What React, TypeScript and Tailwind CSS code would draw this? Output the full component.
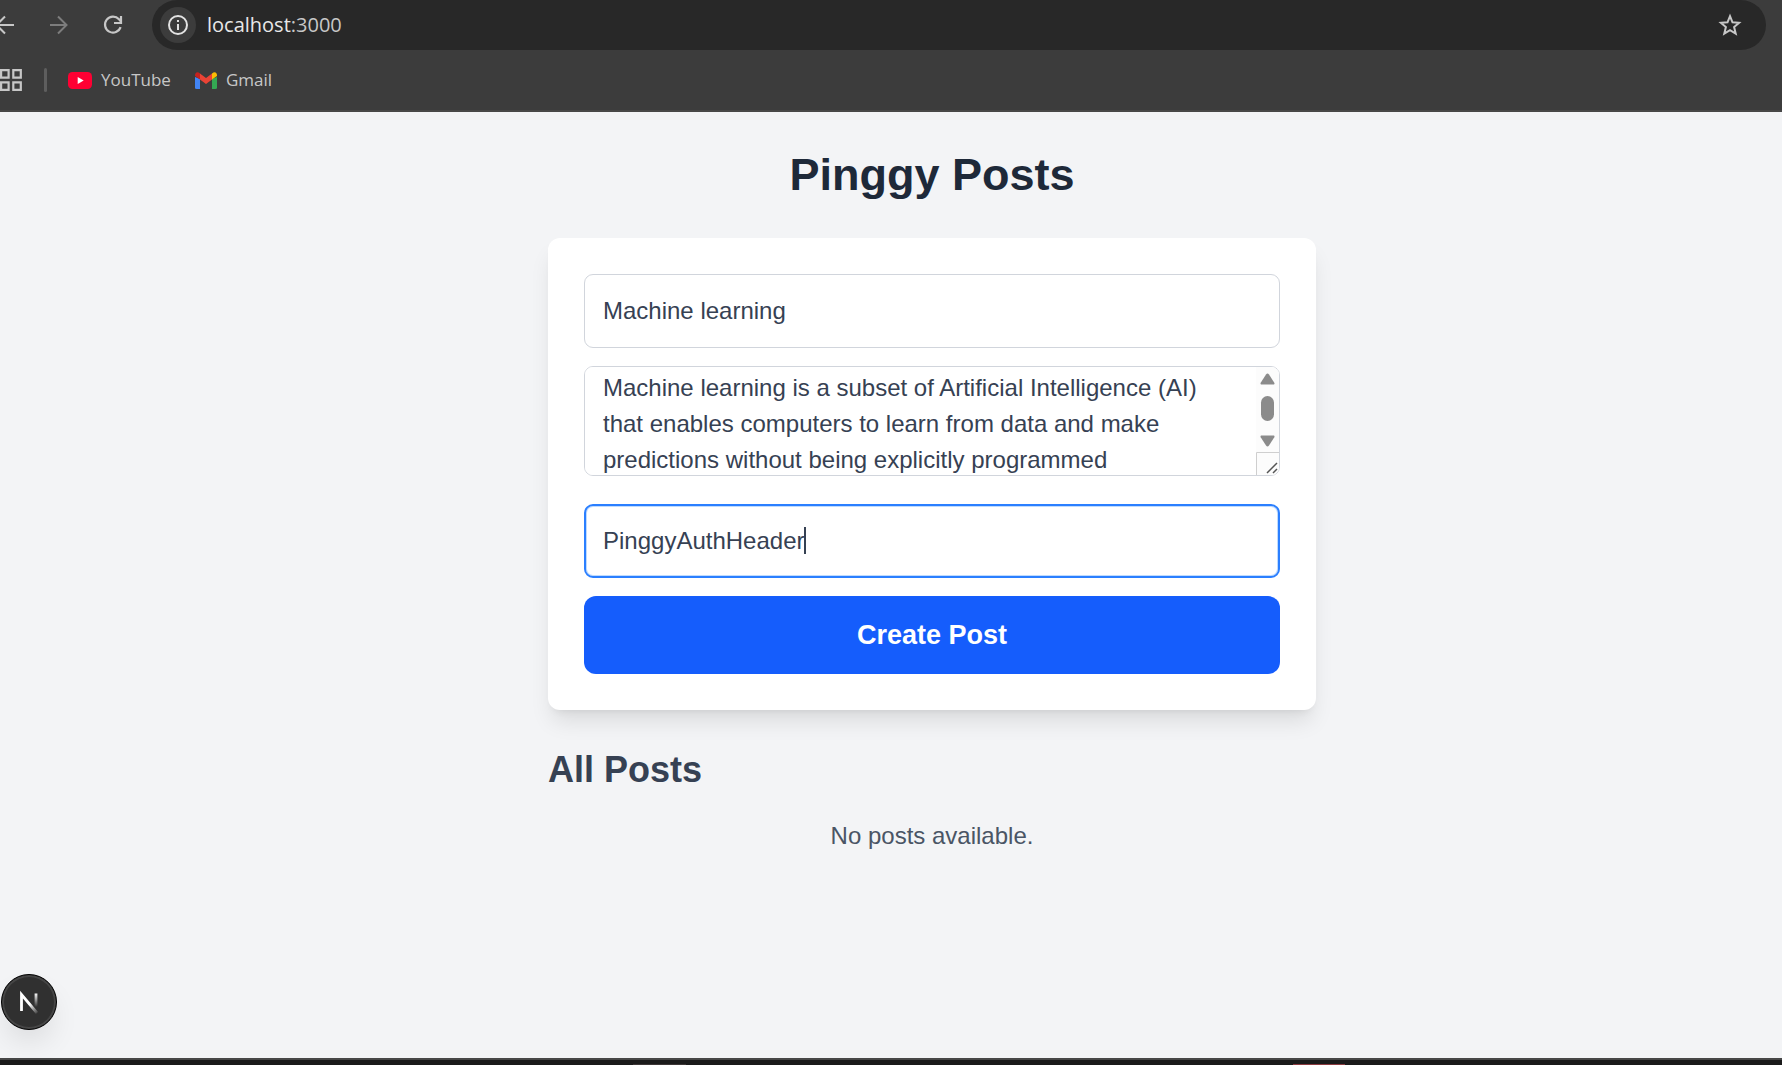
import { useLayoutEffect, useRef } from "react";

const fieldClass =
  "block w-full rounded-[9px] border border-gray-300 bg-white px-[18px] py-[18px] text-2xl leading-9 text-gray-700 outline-none";

function BackIcon() {
  return (
    <svg width="20" height="20" viewBox="0 0 20 20" fill="none" stroke="#c7c7c7" strokeWidth="2">
      <path d="M20 10H3M11 1.5L2.5 10l8.500 8.500" />
    </svg>
  );
}

function ForwardIcon() {
  return (
    <svg width="20" height="20" viewBox="0 0 20 20" fill="none" stroke="#7d7d7d" strokeWidth="2">
      <path d="M1 10h16M9 1.500L17.500 10L9 18.500" />
    </svg>
  );
}

function ReloadIcon() {
  return (
    <svg width="20" height="20" viewBox="0 0 20 20" fill="none" stroke="#c7c7c7" strokeWidth="2.200">
      <path d="M17.600 12.200A8 8 0 1 1 16 4.300L18 6.500" />
      <path d="M18 1v7h-7" />
    </svg>
  );
}

function InfoIcon() {
  return (
    <svg width="20" height="20" viewBox="0 0 20 20" fill="none" stroke="#e3e3e3" strokeWidth="2">
      <circle cx="10" cy="10" r="9" />
      <path d="M10 9v6M10 5v2" />
    </svg>
  );
}

function StarIcon() {
  return (
    <svg width="24" height="24" viewBox="0 0 24 24" fill="none" stroke="#c7c7c7" strokeWidth="2">
      <path d="M12 3.200l2.500 6.100 6.600.5-5 4.300 1.600 6.500L12 17.100l-5.700 3.500 1.600-6.500-5-4.300 6.600-.5z" />
    </svg>
  );
}

function AppsIcon() {
  return (
    <svg width="22" height="22" viewBox="0 0 22 22" fill="none" stroke="#c7c7c7" strokeWidth="2.200">
      <path d="M1.100 1.100h7.500v7.500H1.100zM13.300 1.100h7.500v7.500h-7.500zM1.100 13.300h7.500v7.500H1.100zM13.300 13.300h7.500v7.500h-7.500z" />
    </svg>
  );
}

function YouTubeIcon() {
  return (
    <svg width="24" height="17" viewBox="0 0 24 17">
      <rect width="24" height="17" rx="4.500" fill="#ff0033" />
      <path d="M9.700 5v7l6-3.500z" fill="#fff" />
    </svg>
  );
}

function GmailIcon() {
  return (
    <svg width="22" height="17" viewBox="0 0 22 17">
      <path d="M0 5v10.500Q0 17 1.500 17H5V7z" fill="#4285f4" />
      <path d="M22 5v10.500q0 1.500-1.500 1.500H17V7z" fill="#34a853" />
      <path d="M5 7.500v-6l6 4.500 6-4.500v6L11 12z" fill="#ea4335" />
      <path d="M0 3.500Q0 .5 2.500.3 3.500.3 5 1.500v6L0 4z" fill="#c5221f" />
      <path d="M22 3.500Q22 .5 19.500.3 18.500.3 17 1.500v6L22 4z" fill="#fbbc04" />
    </svg>
  );
}

function BrowserBar() {
  return (
    <header className="h-28 overflow-hidden border-b-2 border-[#474747] bg-[#3c3c3c] font-['Open_Sans','Noto_Sans',sans-serif]">
      <div className="flex h-[50px] items-center pr-4">
        <button aria-label="Back" className="-ml-1.5 mr-[35px]">
          <BackIcon />
        </button>
        <button aria-label="Forward" className="mr-[34px]">
          <ForwardIcon />
        </button>
        <button aria-label="Reload" className="mr-[29px]">
          <ReloadIcon />
        </button>
        <div className="flex h-full min-w-0 flex-1 items-center rounded-full bg-[#282828] pl-2 pr-6">
          <button
            aria-label="View site information"
            className="flex size-9 shrink-0 items-center justify-center rounded-full bg-[#3c3c3c]"
          >
            <InfoIcon />
          </button>
          <div className="flex-1 pl-[11px] text-xl leading-7 text-[#c7c7c7]">
            <span className="text-[#e8e8e8]">localhost</span>:3000
          </div>
          <button aria-label="Bookmark this page">
            <StarIcon />
          </button>
        </div>
      </div>
      <nav aria-label="Bookmarks" className="flex h-[60px] items-center text-[17px] leading-6 text-[#c7c7c7]">
        <button aria-label="Apps">
          <AppsIcon />
        </button>
        <span className="ml-[22px] h-6 w-[3px] rounded-full bg-[#5e5e5e]" />
        <a href="#youtube" className="ml-[21px] flex items-center gap-[9px]">
          <YouTubeIcon />
          YouTube
        </a>
        <a href="#gmail" className="ml-6 flex items-center gap-[9px]">
          <GmailIcon />
          Gmail
        </a>
      </nav>
    </header>
  );
}

function ScrollTrack() {
  return (
    <div className="absolute inset-y-px right-px flex w-[23px] flex-col overflow-hidden rounded-r-lg bg-[#fcfcfc]">
      <svg className="h-[85px] w-full" viewBox="0 0 23 85" fill="#8b8b8b">
        <path d="M5 17.500q-1-.5-.3-1.800L10 7.500q1.500-1.800 3 0l5.300 8.200q.7 1.300-.3 1.800z" />
        <rect x="5" y="29" width="13" height="25" rx="6.500" />
        <path d="M5 68.500q-1 .5-.3 1.800l5.300 8.200q1.500 1.800 3 0l5.300-8.200q.7-1.300-.3-1.800z" />
      </svg>
      <svg className="h-[23px] w-full" viewBox="0 0 23 23" fill="none">
        <path d="M.5 23V.5H23" stroke="#cfcfcf" />
        <path d="M11 21L21 11M17 21l4-4" stroke="#555" strokeWidth="1.500" />
      </svg>
    </div>
  );
}

function ContentField() {
  const ref = useRef<HTMLTextAreaElement>(null);
  useLayoutEffect(() => {
    if (ref.current) ref.current.scrollTop = 15;
  }, []);
  return (
    <div className="relative mt-[18px]">
      <textarea
        ref={ref}
        aria-label="Content"
        spellCheck={false}
        defaultValue="Machine learning is a subset of Artificial Intelligence (AI) that enables computers to learn from data and make predictions without being explicitly programmed"
        className="block h-[110px] w-full resize-none rounded-[9px] border border-gray-300 bg-white py-[18px] pl-[18px] pr-[41px] text-2xl leading-9 text-gray-700 outline-none [scrollbar-width:none]"
      />
      <ScrollTrack />
    </div>
  );
}

function NextBadge() {
  return (
    <button
      aria-label="Open Next.js Dev Tools"
      className="absolute bottom-7 left-px flex size-14 items-center justify-center rounded-full border border-black bg-[#303030] shadow-[inset_0_0_0_2px_#454545,0_16px_32px_-8px_rgba(0,0,0,0.14)]"
    >
      <svg width="20" height="24" viewBox="0 0 20 24" fill="none">
        <defs>
          <linearGradient id="stem" x1="0" y1="3" x2="0" y2="17" gradientUnits="userSpaceOnUse">
            <stop stopColor="#fff" />
            <stop offset="1" stopColor="#fff" stopOpacity="0" />
          </linearGradient>
          <linearGradient id="slash" x1="11" y1="14" x2="19" y2="24" gradientUnits="userSpaceOnUse">
            <stop stopColor="#fff" />
            <stop offset="1" stopColor="#fff" stopOpacity="0" />
          </linearGradient>
        </defs>
        <path d="M2.500 21V4.500L18 23" stroke="url(#slash)" strokeWidth="2.800" />
        <path d="M17 3.500V17" stroke="url(#stem)" strokeWidth="2.800" />
      </svg>
    </button>
  );
}

export default function App() {
  return (
    <div className="flex min-h-screen flex-col overflow-x-hidden bg-gray-100 font-['Liberation_Sans',Arial,sans-serif]">
      <BrowserBar />
      <main className="relative flex-1 pl-[82px] pt-9">
        <div className="mx-auto max-w-3xl">
          <h1 className="text-center text-[45px] font-bold leading-[54px] text-gray-800">Pinggy Posts</h1>
          <form
            onSubmit={(e) => e.preventDefault()}
            className="mt-9 rounded-xl bg-white p-9 shadow-[0_15px_22px_-4px_rgba(0,0,0,0.1),0_6px_9px_-6px_rgba(0,0,0,0.1)]"
          >
            <input aria-label="Title" defaultValue="Machine learning" className={fieldClass} />
            <ContentField />
            <div className="relative mt-7">
              <input
                aria-label="Auth header"
                defaultValue="PinggyAuthHeader"
                spellCheck={false}
                className="block w-full rounded-[9px] border-2 border-[#2b7fff] bg-white px-[17px] py-[17px] text-2xl leading-9 text-gray-700 caret-transparent shadow-[inset_0_0_0_1px_#bfdbfe] outline-none"
              />
              <span className="absolute left-[220px] top-[23px] h-[27px] w-0.5 bg-gray-700" />
            </div>
            <button
              type="submit"
              className="mt-[18px] block w-full rounded-xl bg-[#155dfc] py-[18px] text-[27px] font-bold leading-[42px] text-white"
            >
              Create Post
            </button>
          </form>
          <h2 className="mt-9 text-4xl font-bold leading-[48px] text-gray-700">All Posts</h2>
          <p className="mt-6 text-center text-2xl leading-9 text-gray-600">No posts available.</p>
        </div>
        <NextBadge />
      </main>
      <footer className="h-[7px] border-t-2 border-[#474747] bg-[#1a1a1a]">
        <div className="flex h-full items-end justify-end pr-[437px]">
          <span className="mr-[607px] h-px w-[53px] bg-[#3c3636]" />
          <span className="h-px w-[52px] bg-[#8a3a3f]" />
        </div>
      </footer>
    </div>
  );
}
